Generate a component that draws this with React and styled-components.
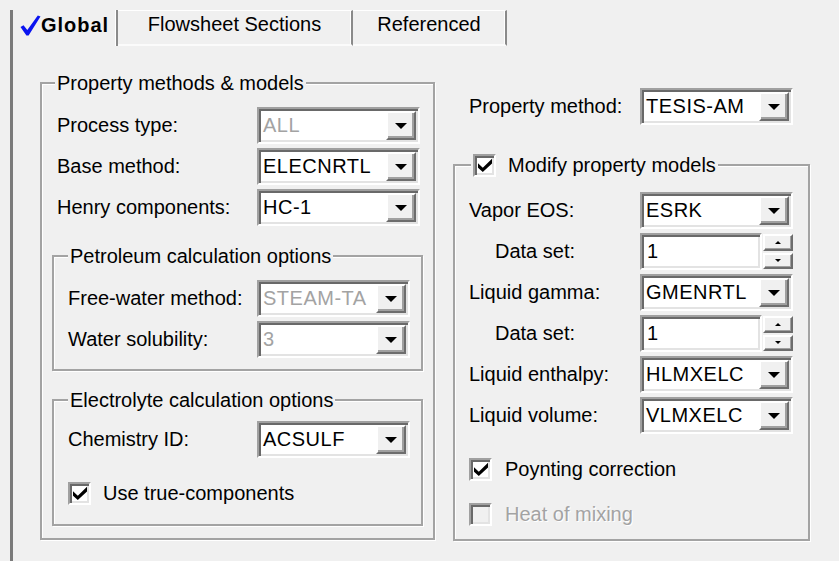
import React from 'react';
import styled, { createGlobalStyle, css } from 'styled-components';

const GlobalStyle = createGlobalStyle`
  html, body { margin: 0; padding: 0; height: 100%; background: #f0f0f0; overflow: hidden; }
  body { font-family: "Liberation Sans", Arial, sans-serif; font-size: 20px; color: #000; }
  #root { height: 100%; }
`;

const Page = styled.div`
  height: 100%;
  box-sizing: border-box;
  padding: 10px 0 0 10px;
  display: flex;
`;

const Frame = styled.div`
  flex: 1;
  border-left: 3px solid #7a7a7a;
  display: flex;
  flex-direction: column;
`;

const TabStrip = styled.div`
  display: flex;
  height: 36px;
`;

const Tab = styled.div`
  width: ${p => p.$w}px;
  box-sizing: border-box;
  display: flex;
  align-items: center;
  justify-content: center;
  padding-bottom: 6px;
  border-right: 2px solid #8a8a8a;
  box-shadow: inset -1px 0 0 #ffffff;
  white-space: nowrap;
  ${p => p.$active
    ? css`font-weight: bold; letter-spacing: 1px;`
    : css`border-top: 1px solid #ffffff; border-bottom: 2px solid #fbfbfb;`}
`;

const TabBody = styled.div`
  flex: 1;
  display: flex;
  align-items: flex-start;
  gap: 18px;
  padding: 25px 0 0 27px;
`;

const Group = styled.fieldset`
  box-sizing: border-box;
  width: ${p => p.$w}px;
  min-width: 0;
  margin: ${p => p.$mt || 0}px 0 0 0;
  padding: ${p => p.$pad};
  border: 2px solid #a3a3a3;
  box-shadow: 1px 1px 0 #ffffff, inset 1px 1px 0 #ffffff;
`;

const Legend = styled.legend`
  padding: 0 2px;
  margin-left: ${p => p.$ml || 0}px;
  background: #f0f0f0;
  line-height: 24px;
  white-space: nowrap;
`;

const LegendInner = styled.span`
  display: inline-flex;
  align-items: center;
  gap: 12px;
  height: 24px;
  vertical-align: top;
`;

const Rows = styled.div`
  display: flex;
  flex-direction: column;
  gap: ${p => p.$gap ?? 4}px;
  padding: ${p => p.$pad || 0};
`;

const Row = styled.div`
  display: flex;
  align-items: center;
  height: 37px;
  padding-left: ${p => p.$indent || 0}px;
`;

const Label = styled.span`
  flex-shrink: 0;
  width: ${p => p.$w}px;
  white-space: nowrap;
`;

const ComboBox = styled.div`
  box-sizing: border-box;
  width: ${p => p.$w}px;
  height: 37px;
  display: flex;
  padding: 2px;
  background: #ffffff;
  border: 2px solid;
  border-color: #a0a0a0 #ffffff #ffffff #a0a0a0;
  box-shadow: inset 2px 2px 0 #696969, inset -2px -2px 0 #e3e3e3;
`;

const ComboValue = styled.span`
  flex: 1;
  display: flex;
  align-items: center;
  padding-left: 2px;
  letter-spacing: 0.5px;
  overflow: hidden;
  white-space: nowrap;
  color: ${p => (p.$disabled ? '#a3a3a3' : '#000000')};
`;

const DropButton = styled.span`
  box-sizing: border-box;
  width: 30px;
  flex-shrink: 0;
  display: flex;
  align-items: center;
  justify-content: center;
  background: #f0f0f0;
  border: 2px solid;
  border-color: #ffffff #6d6d6d #6d6d6d #ffffff;
  box-shadow: inset -2px -2px 0 #a0a0a0;
`;

const Arrow = styled.span`
  width: 0;
  height: 0;
  border-left: ${p => p.$s}px solid transparent;
  border-right: ${p => p.$s}px solid transparent;
  ${p => (p.$up
    ? css`border-bottom: ${p.$s}px solid #000;`
    : css`border-top: ${p.$s}px solid #000;`)}
`;

const SpinBox = styled.div`
  display: flex;
  height: 37px;
  gap: 1px;
`;

const SpinField = styled.div`
  box-sizing: border-box;
  width: 122px;
  height: 100%;
  display: flex;
  align-items: center;
  padding: 2px 2px 2px 5px;
  background: #ffffff;
  border: 2px solid;
  border-color: #a0a0a0 #ffffff #ffffff #a0a0a0;
  box-shadow: inset 2px 2px 0 #696969, inset -2px -2px 0 #e3e3e3;
`;

const SpinButtons = styled.div`
  width: 30px;
  display: flex;
  flex-direction: column;
  gap: 2px;
  padding: 1px 0;
  box-sizing: border-box;
`;

const SpinBtn = styled.span`
  flex: 1;
  box-sizing: border-box;
  display: flex;
  align-items: center;
  justify-content: center;
  background: #f0f0f0;
  border: 2px solid;
  border-color: #ffffff #6d6d6d #6d6d6d #ffffff;
  box-shadow: inset -1px -1px 0 #a0a0a0;
`;

const Box = styled.span`
  box-sizing: border-box;
  width: 23px;
  height: 23px;
  flex-shrink: 0;
  display: flex;
  align-items: center;
  justify-content: center;
  background: ${p => (p.$disabled ? '#f0f0f0' : '#ffffff')};
  border: 2px solid;
  border-color: #a0a0a0 #ffffff #ffffff #a0a0a0;
  box-shadow: inset 2px 2px 0 #696969, inset -2px -2px 0 #e3e3e3;
`;

const CheckRow = styled.div`
  display: flex;
  align-items: center;
  gap: ${p => p.$gap || 12}px;
  height: 24px;
  padding-left: ${p => p.$indent || 0}px;
  margin-top: ${p => p.$mt || 0}px;
  white-space: nowrap;
  color: ${p => (p.$disabled ? '#a3a3a3' : '#000000')};
  ${p => p.$disabled && css`text-shadow: 1px 1px 0 #ffffff;`}
`;

const RightColumn = styled.div`
  width: 357px;
  display: flex;
  flex-direction: column;
`;

const TopRow = styled(Row)`
  margin-top: 17px;
  padding-left: 16px;
`;

const TickIcon = () => (
  <svg width="14" height="14" viewBox="0 0 7 7" aria-hidden="true">
    <path d="M0 2.6 L2.4 4.9 L7 0.4 L7 2.8 L2.4 7 L0 4.9 Z" fill="#000" />
  </svg>
);

const BlueCheck = () => (
  <svg width="21" height="21" viewBox="0 0 21 21" aria-hidden="true">
    <path d="M0.5 12 L3.5 10.2 L7.3 15 L17.8 0.5 L20.5 1.6 L8.6 20.5 L6.4 20.5 Z" fill="#0a14f0" />
  </svg>
);

const Check = ({ checked, disabled }) => (
  <Box $disabled={disabled}>{checked && <TickIcon />}</Box>
);

const Combo = ({ w, value, disabled }) => (
  <ComboBox $w={w}>
    <ComboValue $disabled={disabled}>{value}</ComboValue>
    <DropButton><Arrow $s={6} /></DropButton>
  </ComboBox>
);

const Spin = ({ value }) => (
  <SpinBox>
    <SpinField>{value}</SpinField>
    <SpinButtons>
      <SpinBtn><Arrow $s={3} $up /></SpinBtn>
      <SpinBtn><Arrow $s={3} /></SpinBtn>
    </SpinButtons>
  </SpinBox>
);

export default function App() {
  return (
    <>
      <GlobalStyle />
      <Page>
        <Frame>
          <TabStrip>
            <Tab $w={105} $active><BlueCheck />Global</Tab>
            <Tab $w={235}>Flowsheet Sections</Tab>
            <Tab $w={154}>Referenced</Tab>
          </TabStrip>
          <TabBody>
            <Group $w={395} $pad="12px 10px 12px 10px">
              <Legend $ml={3}>Property methods &amp; models</Legend>
              <Rows $pad="0 3px 0 5px">
                <Row><Label $w={200}>Process type:</Label><Combo w={163} value="ALL" disabled /></Row>
                <Row><Label $w={200}>Base method:</Label><Combo w={163} value="ELECNRTL" /></Row>
                <Row><Label $w={200}>Henry components:</Label><Combo w={163} value="HC-1" /></Row>
              </Rows>
              <Group $w={371} $mt={18} $pad="12px 11px 11px 14px">
                <Legend>Petroleum calculation options</Legend>
                <Rows>
                  <Row><Label $w={189}>Free-water method:</Label><Combo w={153} value="STEAM-TA" disabled /></Row>
                  <Row><Label $w={189}>Water solubility:</Label><Combo w={153} value="3" disabled /></Row>
                </Rows>
              </Group>
              <Group $w={371} $mt={17} $pad="9px 11px 19px 14px">
                <Legend>Electrolyte calculation options</Legend>
                <Row><Label $w={189}>Chemistry ID:</Label><Combo w={153} value="ACSULF" /></Row>
                <CheckRow $mt={23}><Check checked />Use true-components</CheckRow>
              </Group>
            </Group>

            <RightColumn>
              <TopRow><Label $w={171}>Property method:</Label><Combo w={153} value="TESIS-AM" /></TopRow>
              <Group $w={357} $mt={28} $pad="15px 15px 13px 14px">
                <Legend $ml={2}>
                  <LegendInner><Check checked />Modify property models</LegendInner>
                </Legend>
                <Rows>
                  <Row><Label $w={171}>Vapor EOS:</Label><Combo w={153} value="ESRK" /></Row>
                  <Row $indent={26}><Label $w={145}>Data set:</Label><Spin value="1" /></Row>
                  <Row><Label $w={171}>Liquid gamma:</Label><Combo w={153} value="GMENRTL" /></Row>
                  <Row $indent={26}><Label $w={145}>Data set:</Label><Spin value="1" /></Row>
                  <Row><Label $w={171}>Liquid enthalpy:</Label><Combo w={153} value="HLMXELC" /></Row>
                  <Row><Label $w={171}>Liquid volume:</Label><Combo w={153} value="VLMXELC" /></Row>
                </Rows>
                <CheckRow $mt={23} $gap={13}><Check checked />Poynting correction</CheckRow>
                <CheckRow $mt={21} $gap={13} $disabled><Check disabled />Heat of mixing</CheckRow>
              </Group>
            </RightColumn>
          </TabBody>
        </Frame>
      </Page>
    </>
  );
}
